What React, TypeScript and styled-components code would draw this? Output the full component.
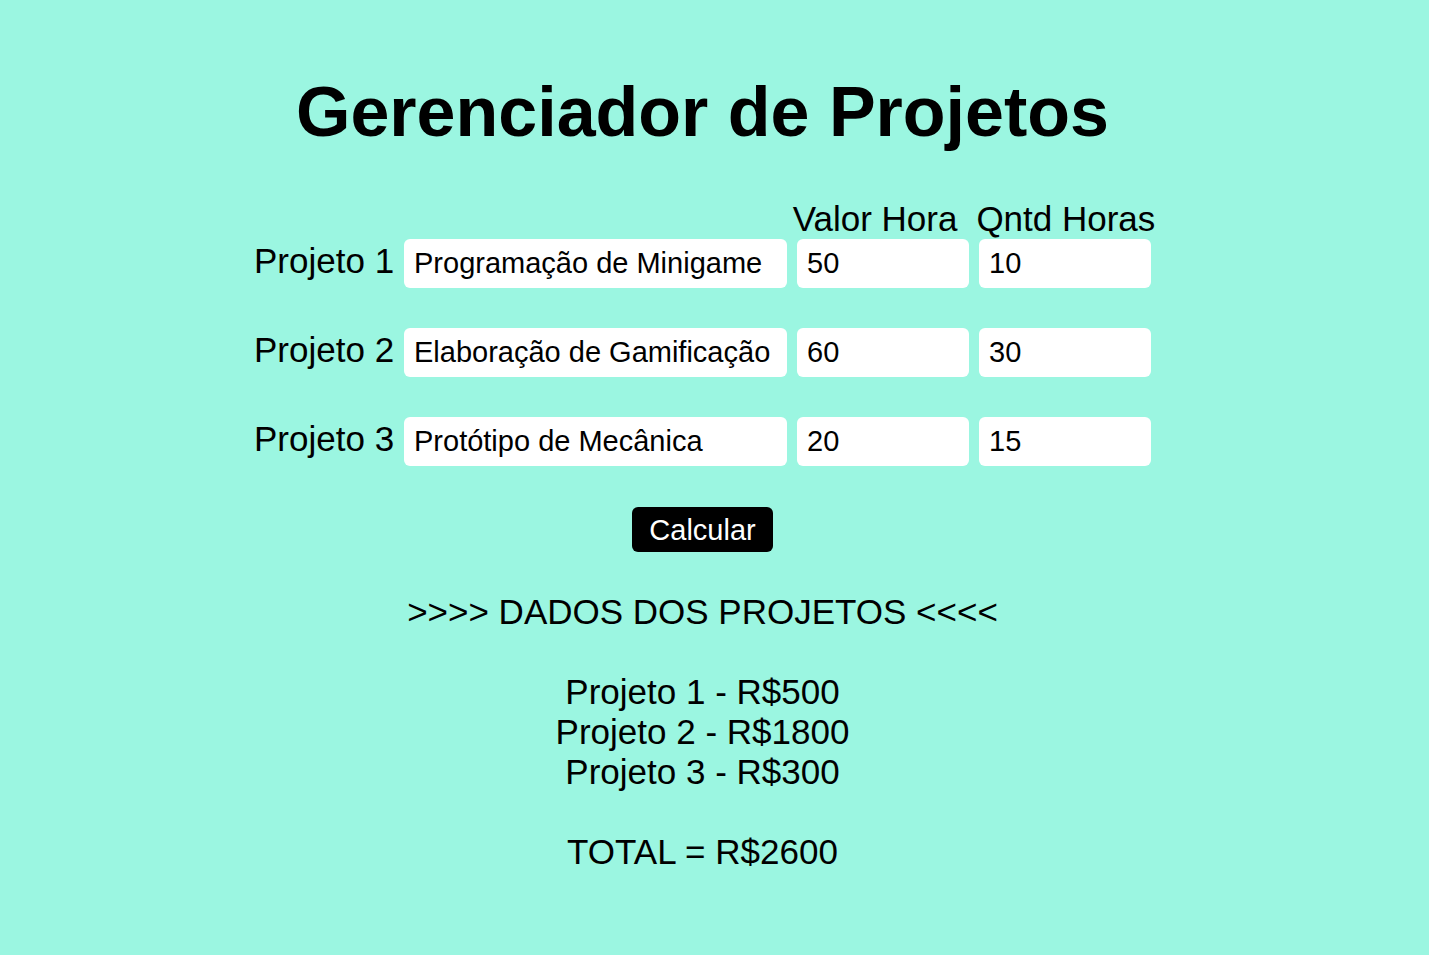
import React, { useState } from "react";
import styled, { createGlobalStyle, css } from "styled-components";

const GlobalStyle = createGlobalStyle`
  * { box-sizing: border-box; }
  body {
    margin: 0;
    min-height: 100vh;
    background: #9bf6e1;
    color: #000;
    font-family: "Liberation Sans", Arial, sans-serif;
    font-size: 35px;
    line-height: 40px;
  }
`;

const Page = styled.main`
  display: flex;
  flex-direction: column;
  align-items: center;
  padding: 72px 24px 40px 0;
`;

const Title = styled.h1`
  margin: 0 0 47px;
  font-size: 70px;
  line-height: 80px;
  font-weight: 700;
`;

const Form = styled.form`
  display: flex;
  flex-direction: column;
  align-items: center;
`;

const columns = css`
  display: grid;
  grid-template-columns: 140px 383px 172px 172px;
  column-gap: 10px;
`;

const HeadingRow = styled.div`
  ${columns}
`;

const Headings = styled.div`
  grid-column: 3 / -1;
  display: flex;
  justify-content: center;
  gap: 19px;
  white-space: nowrap;
`;

const Fields = styled.div`
  ${columns}
  row-gap: 40px;
  align-items: start;
  margin-bottom: 41px;
`;

const Label = styled.label`
  padding-top: 2px;
  white-space: nowrap;
`;

const Input = styled.input`
  width: 100%;
  height: 49px;
  padding: 0 10px;
  border: 0;
  border-radius: 6px;
  background: #fff;
  color: #000;
  font: inherit;
  font-size: 29px;
`;

const Button = styled.button`
  height: 45px;
  padding: 0 17px;
  border: 0;
  border-radius: 6px;
  background: #000;
  color: #fff;
  font: inherit;
  font-size: 29px;
  line-height: 44px;
  cursor: pointer;
`;

const Report = styled.section`
  margin-top: 40px;
  text-align: center;
`;

const Line = styled.p`
  margin: 0;
`;

const Results = styled.div`
  margin: 40px 0;
`;

const initial = [
  { name: "Programação de Minigame", rate: "50", hours: "10" },
  { name: "Elaboração de Gamificação", rate: "60", hours: "30" },
  { name: "Protótipo de Mecânica", rate: "20", hours: "15" },
];

const amounts = (list: typeof initial) => list.map((p) => Number(p.rate) * Number(p.hours));

export default function App() {
  const [projects, setProjects] = useState(initial);
  const [values, setValues] = useState(amounts(initial));

  const update = (index: number, key: "name" | "rate" | "hours", value: string) =>
    setProjects(projects.map((p, i) => (i === index ? { ...p, [key]: value } : p)));

  return (
    <>
      <GlobalStyle />
      <Page>
        <Title>Gerenciador de Projetos</Title>
        <Form
          onSubmit={(e) => {
            e.preventDefault();
            setValues(amounts(projects));
          }}
        >
          <HeadingRow>
            <Headings>
              <span id="rate">Valor Hora</span>
              <span id="hours">Qntd Horas</span>
            </Headings>
          </HeadingRow>
          <Fields>
            {projects.map((p, i) => (
              <React.Fragment key={i}>
                <Label id={`project-${i}`} htmlFor={`name-${i}`}>Projeto {i + 1}</Label>
                <Input id={`name-${i}`} value={p.name} onChange={(e) => update(i, "name", e.target.value)} />
                <Input aria-labelledby={`project-${i} rate`} value={p.rate} onChange={(e) => update(i, "rate", e.target.value)} />
                <Input aria-labelledby={`project-${i} hours`} value={p.hours} onChange={(e) => update(i, "hours", e.target.value)} />
              </React.Fragment>
            ))}
          </Fields>
          <Button type="submit">Calcular</Button>
        </Form>
        <Report>
          <Line>&gt;&gt;&gt;&gt; DADOS DOS PROJETOS &lt;&lt;&lt;&lt;</Line>
          <Results>
            {values.map((v, i) => (
              <Line key={i}>Projeto {i + 1} - R${v}</Line>
            ))}
          </Results>
          <Line>TOTAL = R${values.reduce((a, b) => a + b, 0)}</Line>
        </Report>
      </Page>
    </>
  );
}
